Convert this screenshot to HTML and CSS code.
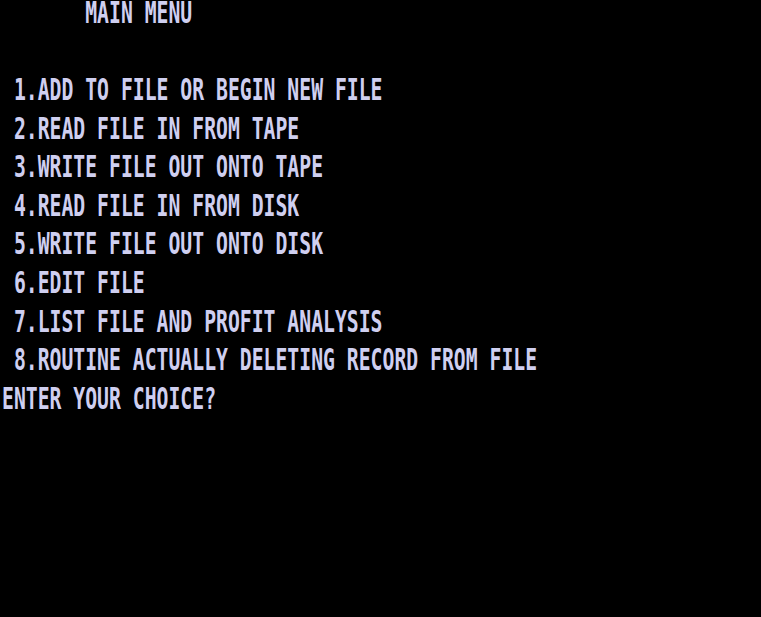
FILE: index.html
```html
<!DOCTYPE html>
<html>
<head>
<meta charset="utf-8">
<link rel="stylesheet" href="styles.css">
</head>
<body>
<div class="screen">
  <div class="row"><span class="txt">       MAIN MENU</span></div>
  <div class="row"><span class="txt"></span></div>
  <div class="row"><span class="txt"> 1.ADD TO FILE OR BEGIN NEW FILE</span></div>
  <div class="row"><span class="txt"> 2.READ FILE IN FROM TAPE</span></div>
  <div class="row"><span class="txt"> 3.WRITE FILE OUT ONTO TAPE</span></div>
  <div class="row"><span class="txt"> 4.READ FILE IN FROM DISK</span></div>
  <div class="row"><span class="txt"> 5.WRITE FILE OUT ONTO DISK</span></div>
  <div class="row"><span class="txt"> 6.EDIT FILE</span></div>
  <div class="row"><span class="txt"> 7.LIST FILE AND PROFIT ANALYSIS</span></div>
  <div class="row"><span class="txt"> 8.ROUTINE ACTUALLY DELETING RECORD FROM FILE</span></div>
  <div class="row"><span class="txt">ENTER YOUR CHOICE?</span></div>
</div>
</body>
</html>
```
FILE: styles.css
```css
html, body {
  margin: 0;
  padding: 0;
  background: #000;
  width: 761px;
  height: 617px;
  overflow: hidden;
}
.screen {
  display: grid;
  grid-template-rows: repeat(16, 38.5625px);
  padding-left: 2px;
  height: 617px;
}
.row {
  height: 38.5625px;
  overflow: visible;
}
.txt {
  display: inline-block;
  white-space: pre;
  font-family: "DejaVu Sans Mono", monospace;
  font-weight: bold;
  font-size: 19.75px;
  line-height: 1;
  color: #cfcff0;
  transform-origin: 0 0;
  transform: translateY(-1px) scaleY(1.5);
}
```
